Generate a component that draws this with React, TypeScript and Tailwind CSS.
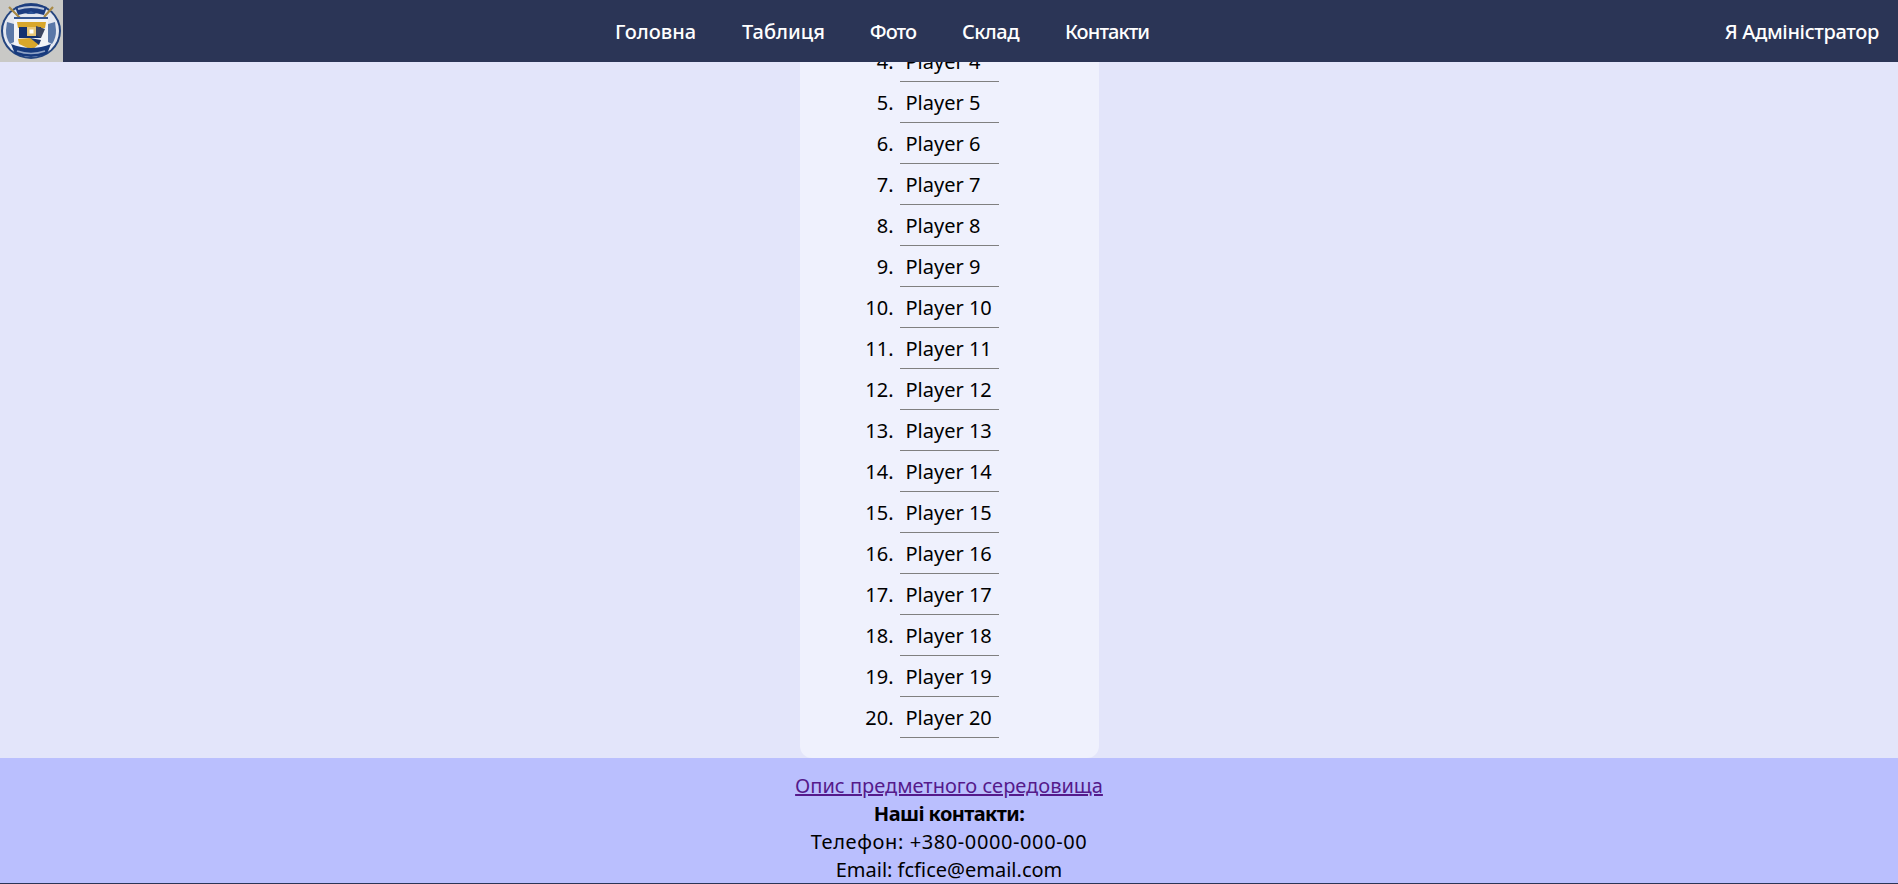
const navItems = [
  { label: 'Головна', cls: '' },
  { label: 'Таблиця', cls: '' },
  { label: 'Фото', cls: '-ml-px tracking-[-1px]' },
  { label: 'Склад', cls: 'tracking-[-0.5px]' },
  { label: 'Контакти', cls: 'tracking-[-0.9px]' },
]
const players = Array.from({ length: 17 }, (_, i) => i + 4)

function Crest() {
  return (
    <svg viewBox="0 0 63 62" className="h-[62px] w-[63px] shrink-0 bg-[#c9c9c6]">
      <ellipse cx="31" cy="31" rx="30" ry="28" fill="#24457f" />
      <ellipse cx="31" cy="31" rx="28" ry="26" fill="#e4e8f0" />
      <path d="M6 30 A25 24 0 0 0 10 44 L14 42 L14 24 L7 22 Z" fill="#5a78a8" />
      <path d="M56 30 A25 24 0 0 1 52 44 L48 42 L48 24 L55 22 Z" fill="#5a78a8" />
      <path d="M15 7 Q31 1 47 7 L44 15 Q31 11 18 15 Z" fill="#1c3d80" />
      <path d="M18 9 Q31 5 44 9" fill="none" stroke="#b7c3d8" strokeWidth="2" />
      <path d="M9 7 L20 18 M53 7 L44 17" stroke="#a98a45" strokeWidth="2.2" />
      <rect x="14" y="17" width="34" height="30" fill="#f1f3f7" />
      <path d="M26 14 L31 11 L36 14 Z" fill="#2f5597" />
      <rect x="14" y="17" width="34" height="2" fill="#35558f" />
      <path d="M17 22 H46 L45 28 H18 Z" fill="#d9a72b" />
      <path d="M19 27 H41 V38 H19 Z" fill="#14326f" />
      <rect x="27" y="27" width="9" height="9" fill="#e9c878" />
      <rect x="29.5" y="29.5" width="4" height="4" fill="#ffffff" />
      <path d="M36 26 L45 29 L41 38 L36 35 Z" fill="#3c4660" />
      <path d="M18 39 L30 38 L39 44 L32 50 L19 44 Z" fill="#d9a72b" />
      <path d="M30 38 L41 40 L39 45 Z" fill="#1f3768" />
      <path d="M11 44 Q31 52 51 44 L47 54 Q31 60 15 54 Z" fill="#173a7d" />
      <path d="M17 51 Q31 56 45 51" fill="none" stroke="#8fa3c6" strokeWidth="1.5" />
    </svg>
  )
}

export default function App() {
  return (
    <div className="min-h-[884px] bg-[#e3e5fa] font-['Comic_Sans_MS','Noto_Sans',sans-serif] text-[20px] text-black">
      <header className="relative z-10 flex h-[62px] items-center bg-[#2b3556] pt-[2px] text-white">
        <div className="-mt-[2px] shrink-0">
          <Crest />
        </div>
        <nav className="absolute left-[615px] flex items-center gap-[46px]">
          {navItems.map((item) => (
            <a key={item.label} href="#" className={`font-medium ${item.cls}`}>
              {item.label}
            </a>
          ))}
        </nav>
        <a href="#" className="ml-auto pr-[19px] font-medium tracking-[-0.35px]">
          Я Адміністратор
        </a>
      </header>

      <main className="mx-auto -mt-[21px] w-[299px] rounded-b-xl bg-[#eff1fd] pb-5">
        <ol>
          {players.map((n) => (
            <li key={n} className="flex h-[41px] pt-[1px]">
              <span className="flex w-[94px] items-center justify-end">{n}.</span>
              <span className="ml-[6px] -mt-[1px] flex w-[99px] items-center border-b border-[#808080] pl-[6px] pt-[1px]">
                Player {n}
              </span>
            </li>
          ))}
        </ol>
      </main>

      <footer className="flex h-[126px] flex-col items-center border-b border-[#2b3556] bg-[#babffe] pt-[14px] leading-[28px]">
        <a href="#" className="text-[#551a8b] underline">
          Опис предметного середовища
        </a>
        <b className="tracking-[-0.6px]">Наші контакти:</b>
        <span className="tracking-[0.6px]">Телефон: +380-0000-000-00</span>
        <span>Email: fcfice@email.com</span>
      </footer>
    </div>
  )
}
